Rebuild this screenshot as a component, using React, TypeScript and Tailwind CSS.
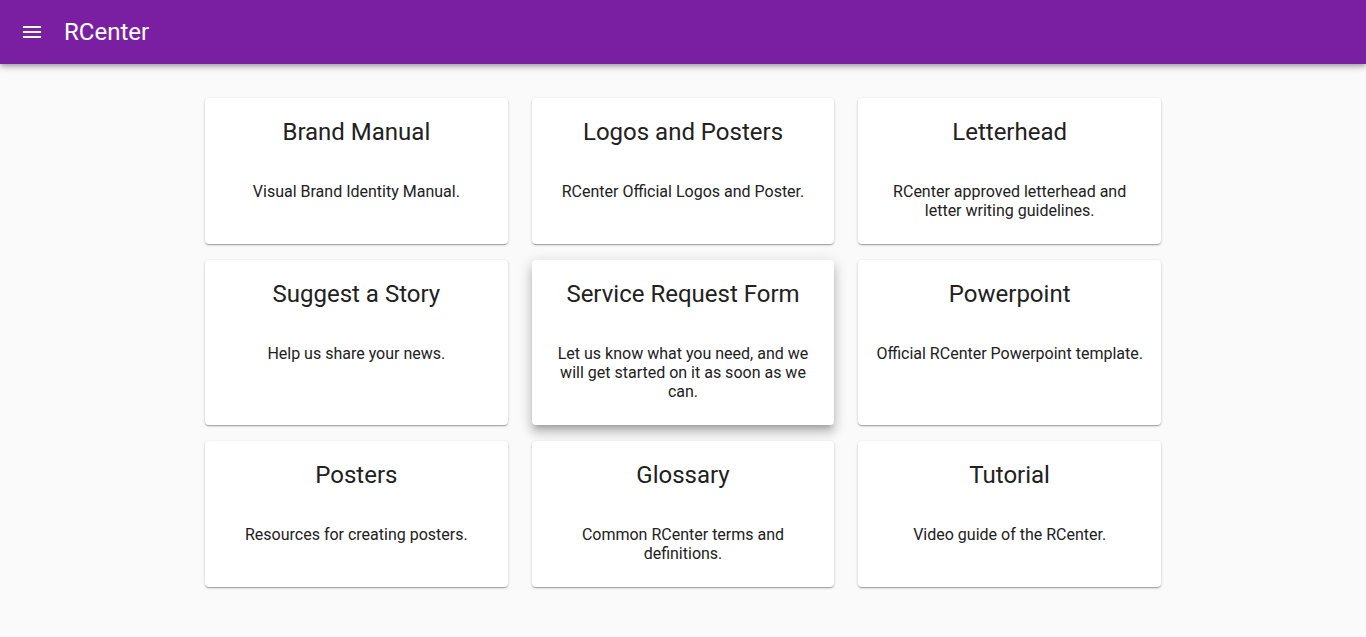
import type React from "react"

type Item = { title: string; text: string }

const items: Item[] = [
    { title: "Brand Manual", text: "Visual Brand Identity Manual." },
    { title: "Logos and Posters", text: "RCenter Official Logos and Poster." },
    { title: "Letterhead", text: "RCenter approved letterhead and letter writing guidelines." },
    { title: "Suggest a Story", text: "Help us share your news." },
    { title: "Service Request Form", text: "Let us know what you need, and we will get started on it as soon as we can." },
    { title: "Powerpoint", text: "Official RCenter Powerpoint template." },
    { title: "Posters", text: "Resources for creating posters." },
    { title: "Glossary", text: "Common RCenter terms and definitions." },
    { title: "Tutorial", text: "Video guide of the RCenter." },
]

const Card: React.FC<{ item: Item; raised?: boolean }> = ({ item, raised }) => {
    return (
        <div
            className={
                "bg-white rounded-[4px] pt-4 pb-6 px-4 text-center text-[#212121] " +
                (raised
                    ? "shadow-[0_5px_5px_-3px_rgba(0,0,0,0.2),0_8px_10px_1px_rgba(0,0,0,0.14),0_3px_14px_2px_rgba(0,0,0,0.12)]"
                    : "shadow-[0_1px_3px_0_rgba(0,0,0,0.2),0_1px_1px_0_rgba(0,0,0,0.14),0_2px_1px_-1px_rgba(0,0,0,0.12)]")
            }
        >
            <h2 className="text-[24px] leading-[36px] font-normal mb-8">{item.title}</h2>
            <p className="text-[16px] leading-[19px]">{item.text}</p>
        </div>
    )
}

export default function App() {
    return (
        <div className="min-h-screen bg-[#fafafa]" style={{ fontFamily: "Roboto, 'Liberation Sans', sans-serif" }}>
            <header className="h-16 bg-[#7b1fa2] text-white flex items-center px-5 shadow-[0_2px_4px_-1px_rgba(0,0,0,0.2),0_4px_5px_0_rgba(0,0,0,0.14),0_1px_10px_0_rgba(0,0,0,0.12)] relative z-10">
                <svg width="24" height="24" viewBox="0 0 24 24" fill="currentColor">
                    <path d="M3 18h18v-2H3v2zm0-5h18v-2H3v2zm0-7v2h18V6H3z" />
                </svg>
                <h1 className="ml-5 text-[24px] font-normal leading-8">RCenter</h1>
            </header>
            <main className="w-[956px] mx-auto pt-[34px] pb-12 grid grid-cols-3 gap-x-6 gap-y-4">
                {items.map((item, i) => (
                    <Card key={item.title} item={item} raised={i === 4} />
                ))}
            </main>
        </div>
    )
}
